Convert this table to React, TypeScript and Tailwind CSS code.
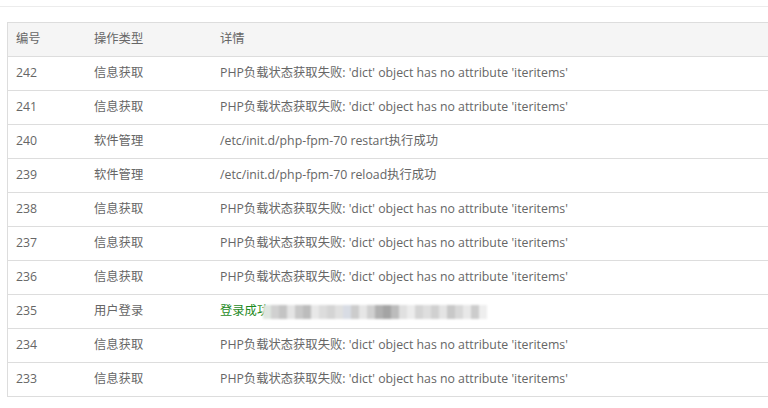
const ROWS = [
  { id: 242, type: "信息获取", detail: "PHP负载状态获取失败: 'dict' object has no attribute 'iteritems'" },
  { id: 241, type: "信息获取", detail: "PHP负载状态获取失败: 'dict' object has no attribute 'iteritems'" },
  { id: 240, type: "软件管理", detail: "/etc/init.d/php-fpm-70 restart执行成功" },
  { id: 239, type: "软件管理", detail: "/etc/init.d/php-fpm-70 reload执行成功" },
  { id: 238, type: "信息获取", detail: "PHP负载状态获取失败: 'dict' object has no attribute 'iteritems'" },
  { id: 237, type: "信息获取", detail: "PHP负载状态获取失败: 'dict' object has no attribute 'iteritems'" },
  { id: 236, type: "信息获取", detail: "PHP负载状态获取失败: 'dict' object has no attribute 'iteritems'" },
  { id: 235, type: "用户登录", detail: "login" },
  { id: 234, type: "信息获取", detail: "PHP负载状态获取失败: 'dict' object has no attribute 'iteritems'" },
  { id: 233, type: "信息获取", detail: "PHP负载状态获取失败: 'dict' object has no attribute 'iteritems'" },
];

// pixelated blur over the login IP
const BLUR = [
  "#dfe6e0", "#d0d0d0", "#c4c4c4", "#e4e4e4", "#c8c8c8", "#bcbcbc", "#e8e8e8", "#dcdcdc",
  "#d4d4d4", "#e0e0e0", "#d8dce4", "#cccccc", "#e6e6e6", "#d0d0d0", "#b0b0b0", "#a4a4a4",
  "#bcbcbc", "#e0e0e0", "#ececec", "#d4d4d4", "#dedede", "#d0d0d0", "#e4e4e4", "#c8c8c8",
  "#d8d8d8", "#e8e8e8", "#cccccc", "#eeeeee",
];

function LoginDetail() {
  return (
    <span className="flex items-center">
      <span className="text-[#1e8a1e]">登录成功</span>
      <span className="flex h-[14px] -ml-[6px] blur-[0.8px]">
        {BLUR.map((c, i) => (
          <span key={i} className="w-[8px] h-full" style={{ backgroundColor: c }} />
        ))}
      </span>
    </span>
  );
}

export default function App() {
  return (
    <div
      className="w-[768px] h-[408px] bg-white overflow-hidden text-[12.3px] text-[#666]"
      style={{ fontFamily: '"Open Sans", "Noto Sans CJK SC", sans-serif' }}
    >
      <div className="h-[7px] border-b border-[#ececec]" />
      <div className="pt-[15px] pl-[7px]">
        <div className="border-l border-t border-[#ddd] w-[800px]">
          <div className="flex items-center h-[34px] bg-[#f5f5f5] border-b border-[#ddd]">
            <div className="w-[86px] pl-[8px]">编号</div>
            <div className="w-[126px]">操作类型</div>
            <div className="flex-1">详情</div>
          </div>
          {ROWS.map((r) => (
            <div key={r.id} className="flex items-center h-[34px] border-b border-[#ddd]">
              <div className="w-[86px] pl-[8px]">{r.id}</div>
              <div className="w-[126px]">{r.type}</div>
              <div className="flex-1">{r.detail === "login" ? <LoginDetail /> : r.detail}</div>
            </div>
          ))}
        </div>
      </div>
    </div>
  );
}
